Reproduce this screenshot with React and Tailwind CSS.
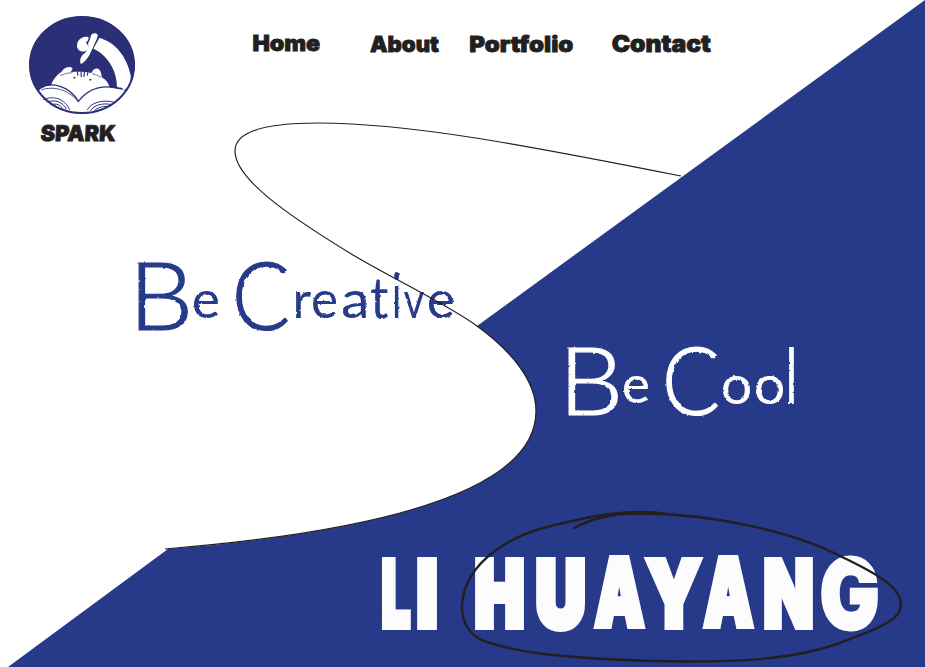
import { useLayoutEffect, useState } from "react";

const DISPLAY = '"Inter", "Liberation Sans", sans-serif';
const SCRIPT = '"Lato", "Liberation Sans", sans-serif';

// Sets a run of text so that its ink fills a w x h box.
function Ink({ text, w, h, family = DISPLAY, weight = 900, stroke = 0, ml = 0, mt = 0 }) {
  const [fit, setFit] = useState(null);
  useLayoutEffect(() => {
    const ctx = document.createElement("canvas").getContext("2d");
    ctx.font = `${weight} 200px ${family}`;
    const m = ctx.measureText(text);
    const inkH = m.actualBoundingBoxAscent + m.actualBoundingBoxDescent;
    const inkW = m.actualBoundingBoxLeft + m.actualBoundingBoxRight;
    const k = (h - stroke) / inkH;
    const sx = w / (inkW * k + stroke);
    const size = 200 * k;
    const base = size / 2 + ((m.fontBoundingBoxAscent - m.fontBoundingBoxDescent) * k) / 2;
    setFit({
      fontSize: size,
      lineHeight: `${size}px`,
      transform: `scaleX(${sx}) translate(${m.actualBoundingBoxLeft * k + stroke / 2}px, ${
        m.actualBoundingBoxAscent * k + stroke / 2 - base
      }px)`,
    });
  }, [text, w, h, family, weight, stroke]);
  return (
    <span className="block shrink-0" style={{ width: w, height: h, marginLeft: ml, marginTop: mt }}>
      <span
        className="block w-max origin-top-left whitespace-pre"
        style={{ fontFamily: family, fontWeight: weight, WebkitTextStroke: stroke ? `${stroke}px currentColor` : undefined, ...fit }}
      >
        {text}
      </span>
    </span>
  );
}

const NAV = [
  { text: "Home", w: 67, h: 17, ml: 0, mt: 1 },
  { text: "About", w: 69, h: 17, ml: 50, mt: 2 },
  { text: "Portfolio", w: 103, h: 18, ml: 31, mt: 0 },
  { text: "Contact", w: 99, h: 18, ml: 39, mt: 1 },
];

// [letter, width, height, gap before, drop from the line top, weight]
const CREATIVE = [
  ["B", 50, 68, 0, 1, 300],
  ["e", 24, 27, 6, 30, 400],
  ["C", 52, 70, 18, 0, 300],
  ["r", 15, 26, 8, 31, 400],
  ["e", 23, 27, 2, 30, 400],
  ["a", 23, 27, 7, 30, 400],
  ["t", 17, 39, 5, 18, 400],
  ["i", 5, 45, 6, 12, 400],
  ["v", 20, 26, 5, 30, 400],
  ["e", 24, 27, 5, 30, 400],
];
const COOL = [
  ["B", 50, 68, 0, 1, 300],
  ["e", 24, 27, 6, 30, 400],
  ["C", 52, 70, 18, 0, 300],
  ["o", 27, 28, 5, 29, 400],
  ["o", 27, 28, 6, 29, 400],
  ["l", 5, 58, 6, -1, 400],
];
const NAME = [
  ["L", 29, 73, 0, 1],
  ["I", 20, 73, 6, 1],
  ["H", 49, 73, 38, 1],
  ["U", 49, 75, 12, 1],
  ["A", 51, 74, 9, 0],
  ["Y", 57, 73, 0, 1],
  ["A", 51, 74, 1, 0],
  ["N", 49, 73, 10, 1],
  ["G", 57, 76, 8, 0],
];

const STROKES = { I: 0, G: 3, H: 8, U: 8 };

function Script({ letters, className }) {
  return (
    <h2 className={`flex items-start [filter:url(#rough)] ${className}`}>
      {letters.map(([c, w, h, ml, mt, weight], i) => (
        <Ink key={i} text={c} w={w} h={h} ml={ml} mt={mt} weight={weight} family={SCRIPT} stroke={weight === 300 ? 1.2 : 0} />
      ))}
    </h2>
  );
}

function Logo() {
  return (
    <svg className="block h-[98px] w-[106px]" viewBox="27 32 318 294">
      <clipPath id="disc"><ellipse cx="186" cy="179" rx="156" ry="144" /></clipPath>
      <ellipse cx="186" cy="179" rx="158" ry="146" fill="#2b2f77" />
      <g clipPath="url(#disc)" fill="#fff">
        <path d="M238 98 C285 110 320 152 332 210 C333 235 325 253 310 254 L291 246 C291 195 262 148 220 130Z" />
        <path d="M93 241 C98 222 112 208 124 200 C133 184 153 181 158 190 L152 200 C178 198 196 200 214 203 C220 190 231 187 237 192 C243 198 245 208 245 216 C257 222 265 232 270 247 L176 290Z" />
        <path d="M206 96 C190 90 171 103 171 121 C171 138 192 144 202 134 C207 128 205 116 197 112 C202 110 206 103 206 96Z" />
        <path d="M213 90 C217 82 230 82 233 89 C234 93 230 103 225 113 L208 150 C202 159 196 169 184 176 C178 174 180 156 188 148 C202 140 207 127 204 114 C209 107 211 99 213 90Z" />
        <path d="M57 256 C76 228 145 235 174 285 C208 244 255 238 319 257 C304 287 261 321 204 326 L158 324 C112 316 77 292 57 256Z" />
      </g>
      <g fill="none" stroke="#2b2f77" strokeWidth="3">
        <path d="M120 211 Q138 202 158 202 M216 205 Q232 208 243 216" strokeWidth="2" />
        <path d="M172 199 L174 211 M183 199 L184 215 M193 200 L192 215 M203 202 L202 211" strokeWidth="3.5" />
        <path d="M62 248 C92 229 149 240 175 288 C210 243 254 238 308 250" strokeWidth="4" />
        <path d="M64 254 C98 241 145 252 174 288" strokeWidth="2.5" />
        <path d="M70 283 C98 270 134 279 149 313 M80 290 C108 281 128 291 139 311 M91 299 C111 292 121 300 128 309" />
        <path d="M202 314 C211 293 245 282 280 290 M211 316 C223 299 246 293 271 297 M223 316 C233 307 247 302 261 303" />
        <ellipse cx="186" cy="179" rx="156" ry="144" strokeWidth="6" />
      </g>
      <circle cx="163" cy="217" r="2.8" fill="#222" />
      <circle cx="211" cy="223" r="2.8" fill="#222" />
    </svg>
  );
}

export default function App() {
  return (
    <main className="relative isolate flex h-[667px] w-[925px] flex-col overflow-hidden bg-white text-[#231f20]">
      <svg className="absolute inset-0 -z-10 h-full w-full" viewBox="0 0 925 667">
        <path
          fill="#263a89"
          d="M925 0 L477 326 C510 350 536 380 536 411 C536 490 385 531 168 549 L8 667 H925Z"
        />
      </svg>

      <header className="flex h-[150px] shrink-0 pt-4 pl-[29px]">
        <div className="w-[106px] shrink-0">
          <Logo />
          <div className="pt-[11px] pl-3 -skew-x-3">
            <Ink text="SPARK" w={75} h={17} stroke={0.8} />
          </div>
        </div>
        <nav className="ml-[118px] flex items-start self-start pt-[19px]">
          {NAV.map((n) => (
            <a key={n.text} href="#">
              <Ink {...n} stroke={0.8} />
            </a>
          ))}
        </nav>
      </header>

      <Script letters={CREATIVE} className="mt-[112px] ml-[138px] h-[71px] shrink-0 text-[#263a89]" />
      <Script letters={COOL} className="mt-[14px] ml-[568px] h-[72px] shrink-0 text-white" />

      <h1 className="mt-[137px] ml-[382px] flex items-start text-[#fcfcfc]">
        {NAME.map(([c, w, h, ml, mt], i) => (
          <Ink key={i} text={c} w={w} h={h} ml={ml} mt={mt} stroke={STROKES[c] ?? 6} />
        ))}
      </h1>

      <svg className="pointer-events-none absolute inset-0 h-full w-full" viewBox="0 0 925 667" fill="none" stroke="#231f20">
        <filter id="rough" x="-5%" y="-5%" width="110%" height="110%">
          <feTurbulence type="fractalNoise" baseFrequency="0.22" numOctaves="2" seed="4" result="n" />
          <feDisplacementMap in="SourceGraphic" in2="n" scale="2.4" xChannelSelector="R" yChannelSelector="G" />
        </filter>
        <path
          strokeWidth="1.2"
          d="M681 176 C530 146 410 123 318 123 C265 123 235 131 235 151 C235 178 284 213 353 255 C395 280 447 304 477 326 C510 350 536 380 536 411 C536 490 385 531 165 549"
        />
        <path
          strokeWidth="2.4"
          strokeLinecap="round"
          d="M574 528 C600 514 625 513.500 640 513.500 C720 513.500 800 535 840 556 C880 575 901 588 901 605 C901 621 875 629 840 643 C795 659 745 661.500 690 661.500 C640 661.500 590 659 543 654 C520 651 503 647 487 642 C470 637 462 622 462 608 C462 570 498 541 543 528 C590 516 615 512 640 512 C653 512 665 513.500 672 515"
        />
      </svg>
    </main>
  );
}
